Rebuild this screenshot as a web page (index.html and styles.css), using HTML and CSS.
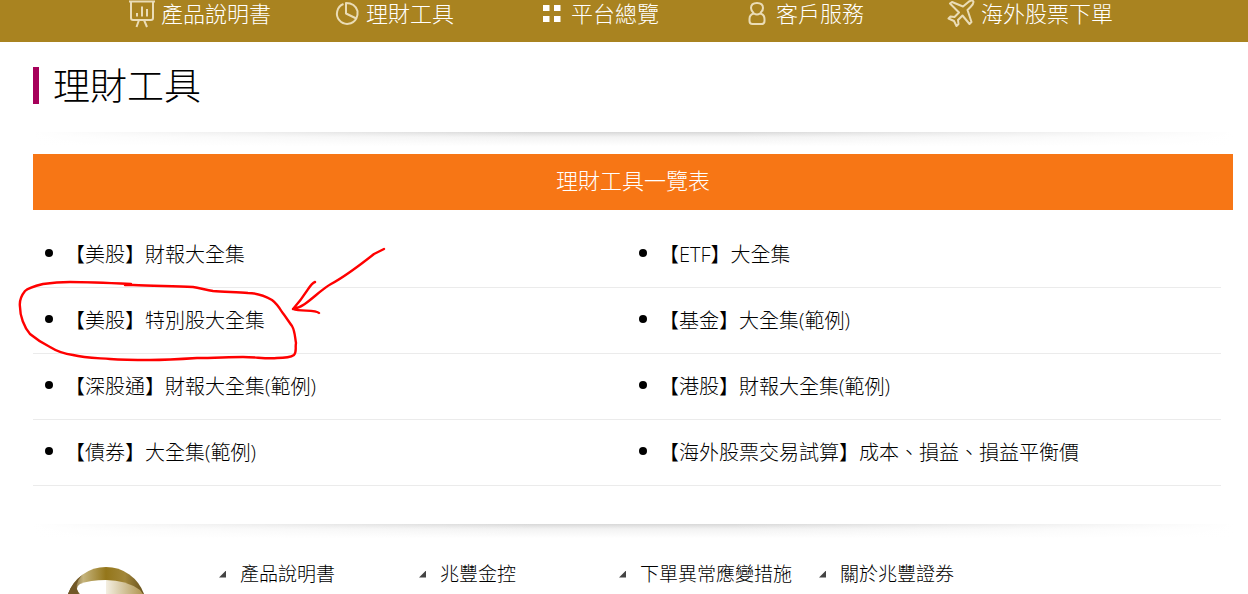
FILE: index.html
```html
<!DOCTYPE html>
<html lang="zh-Hant">
<head>
<meta charset="utf-8">
<meta name="viewport" content="width=device-width, initial-scale=1">
<title>理財工具</title>
<link rel="stylesheet" href="styles.css">
</head>
<body>
<nav class="nav">
  <a class="nav-link" href="#"><svg class="nav-icon" viewBox="0 0 30 28" aria-hidden="true"><path d="M2 1.500H28M4 1.500V18q0 2 2 2H24q2 0 2-2V1.500M12 20L9.500 27M17 20L20 27M10 13V16.500M15 6.500V16.500M20 9V16.500"/></svg>產品說明書</a>
  <a class="nav-link" href="#"><svg class="nav-icon" viewBox="0 0 30 28" aria-hidden="true"><path d="M11.500 4A10.300 10.300 0 1 0 24.300 18.500L14 13.500V3Q23 3 25.500 11Q26 15 24.300 18.500"/></svg>理財工具</a>
  <a class="nav-link" href="#"><svg class="nav-icon nav-icon-solid" viewBox="0 0 30 28" aria-hidden="true"><path d="M6 5h6.500v6H6zM17 5h6.500v6H17zM6 16h6.500v6H6zM17 16h6.500v6H17z"/></svg>平台總覽</a>
  <a class="nav-link" href="#"><svg class="nav-icon" viewBox="0 0 30 28" aria-hidden="true"><path d="M12 13.500Q9 11 9 8Q9 3 15 3T21 8Q21 11 18 13.500M12 13.500Q7.500 14.500 7.500 19V21Q7.500 24 10.500 24H19.500Q22.500 24 22.500 21V19Q22.500 14.500 18 13.500Q15 15.500 12 13.500Z"/></svg>客戶服務</a>
  <a class="nav-link" href="#"><svg class="nav-icon" viewBox="0 0 30 28" aria-hidden="true"><path d="M3 3.500L5 2L16 6.500L22 1.500Q26-.500 26.500 2Q26.500 4 23.500 7L20.500 10L24.500 22L22.500 24L15.500 15.500L11 20L11.500 24L9.500 26L7 21L1.500 18.500L3.500 16.500L7.500 17L12 12.500Z"/></svg>海外股票下單</a>
</nav>

<main class="content">
  <h1 class="title">理財工具</h1>
  <div class="shade"></div>
  <h2 class="banner">理財工具一覽表</h2>
  <ul class="tools">
    <li class="tool"><a href="#">【美股】財報大全集</a></li>
    <li class="tool"><a href="#">【ETF】大全集</a></li>
    <li class="tool"><a href="#">【美股】特別股大全集</a></li>
    <li class="tool"><a href="#">【基金】大全集(範例)</a></li>
    <li class="tool"><a href="#">【深股通】財報大全集(範例)</a></li>
    <li class="tool"><a href="#">【港股】財報大全集(範例)</a></li>
    <li class="tool"><a href="#">【債券】大全集(範例)</a></li>
    <li class="tool"><a href="#">【海外股票交易試算】成本、損益、損益平衡價</a></li>
  </ul>
</main>

<footer class="footer">
  <div class="shade"></div>
  <div class="footer-row">
    <svg class="logo" viewBox="0 0 84 30" aria-hidden="true">
      <defs>
        <linearGradient id="gold"><stop offset="0" stop-color="#5d431b"/><stop offset=".2" stop-color="#c5b47d"/><stop offset=".5" stop-color="#94761a"/><stop offset=".75" stop-color="#a18639"/><stop offset="1" stop-color="#67501c"/></linearGradient>
        <linearGradient id="inner"><stop offset="0" stop-color="#f4efe2"/><stop offset="1" stop-color="#b0954f"/></linearGradient>
      </defs>
      <path d="M3 30A40.200 40.200 0 0 1 79 30Z" fill="url(#gold)"/>
      <path d="M15 30Q9 24 15 20Q25 16 41 16V30Z" fill="#fff"/>
      <path d="M41 16Q61 16 75 26L78 30H41Z" fill="url(#inner)"/>
      <path d="M3 30Q7 19 17 11Q8 21 14 30Z" fill="#725827"/>
    </svg>
    <ul class="footer-links">
      <li><a class="footer-link" href="#">產品說明書</a></li>
      <li><a class="footer-link" href="#">兆豐金控</a></li>
      <li><a class="footer-link" href="#">下單異常應變措施</a></li>
      <li><a class="footer-link" href="#">關於兆豐證券</a></li>
    </ul>
  </div>
</footer>

<svg class="marker" viewBox="0 0 400 130" aria-hidden="true">
  <path d="M125 45L131 44C110 43 88 42 70 42C58 42 50 43 43 44C35 46 28 48 25 51C21 56 19 60 20 67C20 76 24 87 30 94C36 99 42 103 50 107C58 112 65 114 73 115C85 118 98 118 110 119C124 120 137 120 150 120C166 120 182 119 197 118C214 118 229 117 243 117C256 117 266 119 277 118C286 118 291 117 294 115C297 112 295 107 296 103C295 98 295 91 292 86C289 82 286 77 282 72C279 67 276 63 272 60C265 56 256 53 248 53C237 52 224 52 213 51C206 50 200 48 193 47C173 46 153 46 133 45L125 45"/>
  <path d="M384 9L374 14C355 29 344 37 331 44C317 52 306 67 293 69M315 42C309 44 308 53 293 69C301 72 315 69 319 73"/>
</svg>
</body>
</html>
```

FILE: styles.css
```css
* {
  box-sizing: border-box;
}

body {
  position: relative;
  margin: 0;
  background: #fff;
  color: #000;
  font-family: "Open Sans", "Noto Sans CJK TC", sans-serif;
  font-weight: 300;
}

a {
  color: inherit;
  text-decoration: none;
}

ul {
  margin: 0;
  padding: 0;
  list-style: none;
}

.nav {
  display: grid;
  grid-template-columns: repeat(5, 1fr);
  padding: 0 96px 14px 127px;
  background: #a98320;
  color: #fff;
}

.nav-link {
  display: flex;
  align-items: flex-start;
  gap: 4px;
  font-size: 22px;
  line-height: 26px;
  white-space: nowrap;
}

.nav-icon {
  flex: none;
  width: 30px;
  height: 28px;
  fill: none;
  stroke: #eadcb6;
  stroke-width: 2;
  stroke-linejoin: round;
}

.nav-icon-solid {
  fill: #fff;
  stroke: none;
}

.content {
  padding: 25px 15px 0 33px;
}

.title {
  margin: 0 0 28px;
  padding-left: 14px;
  border-left: 6px solid #a6005a;
  font-size: 37px;
  line-height: 37px;
  font-weight: 300;
}

.shade {
  height: 14px;
  background:
    linear-gradient(90deg, #fff, transparent 42%, transparent 58%, #fff),
    linear-gradient(#d8d8d8, #f2f2f2 35%, #fff);
}

.banner {
  margin: 8px 0 12px;
  padding-bottom: 4px;
  background: #f77615;
  color: #fff;
  font-size: 22px;
  line-height: 52px;
  font-weight: 300;
  text-align: center;
}

.tools {
  display: grid;
  grid-template-columns: 1fr 1fr;
  margin-right: 12px;
}

.tool {
  display: flex;
  align-items: center;
  gap: 12px;
  padding-left: 12px;
  border-bottom: 1px solid #ebebeb;
  font-size: 20px;
  line-height: 65px;
}

.tool::before {
  content: "";
  width: 8px;
  height: 8px;
  margin-bottom: 4px;
  border-radius: 50%;
  background: #000;
}

.footer {
  padding: 38px 15px 0 33px;
}

.footer-row {
  display: flex;
  padding: 26px 0 0 32px;
}

.logo {
  flex: none;
  width: 84px;
  height: 30px;
}

.footer-links {
  display: grid;
  grid-template-columns: repeat(4, 200px);
  margin-left: 70px;
}

.footer-link {
  display: flex;
  align-items: center;
  gap: 14px;
  font-size: 19px;
  line-height: 20px;
  white-space: nowrap;
}

.footer-link::before {
  content: "";
  width: 7px;
  height: 7px;
  background: #444;
  clip-path: polygon(100% 0, 100% 100%, 0 100%);
}

.marker {
  position: absolute;
  top: 240px;
  left: 0;
  width: 400px;
  height: 130px;
  overflow: visible;
  fill: none;
  stroke: #f00;
  stroke-width: 2.4;
  stroke-linecap: round;
  stroke-linejoin: round;
  pointer-events: none;
}
```
